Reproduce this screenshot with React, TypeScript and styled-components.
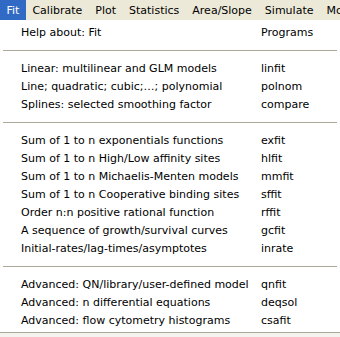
import styled, { createGlobalStyle } from "styled-components"

const GlobalStyle = createGlobalStyle`
body {
  margin: 0;
  background: #ffffff;
  font-family: "DejaVu Sans", "Liberation Sans", sans-serif;
  font-size: 11px;
  color: #000000;
}
`

const bar = ["Fit", "Calibrate", "Plot", "Statistics", "Area/Slope", "Simulate", "Modules"]

const groups = [
    [["Help about: Fit", "Programs"]],
    [
        ["Linear: multilinear and GLM models", "linfit"],
        ["Line; quadratic; cubic;\u2026; polynomial", "polnom"],
        ["Splines: selected smoothing factor", "compare"],
    ],
    [
        ["Sum of 1 to n exponentials functions", "exfit"],
        ["Sum of 1 to n High/Low affinity sites", "hlfit"],
        ["Sum of 1 to n Michaelis-Menten models", "mmfit"],
        ["Sum of 1 to n Cooperative binding sites", "sffit"],
        ["Order n:n positive rational function", "rffit"],
        ["A sequence of growth/survival curves", "gcfit"],
        ["Initial-rates/lag-times/asymptotes", "inrate"],
    ],
    [
        ["Advanced: QN/library/user-defined model", "qnfit"],
        ["Advanced: n differential equations", "deqsol"],
        ["Advanced: flow cytometry histograms", "csafit"],
    ],
]

const App = () => {
    return (
        <Screen>
            <GlobalStyle />
            <MenuBar>
                {bar.map((b, i) => (
                    <BarItem key={b} active={i === 0}>{b}</BarItem>
                ))}
            </MenuBar>
            <Dropdown>
                {groups.map((g, gi) => (
                    <div key={gi}>
                        {gi > 0 && <Separator />}
                        {g.map(([label, prog]) => (
                            <Row key={label}>
                                <Label>{label}</Label>
                                <Prog>{prog}</Prog>
                            </Row>
                        ))}
                    </div>
                ))}
            </Dropdown>
        </Screen>
    )
}

export default App

const Screen = styled.div`
width: 340px;
height: 337px;
overflow: hidden;
background: #f4f3ee;
`

const MenuBar = styled.div`
display: flex;
height: 20px;
background: #ece9d8;
white-space: nowrap;
overflow: hidden;
`

const BarItem = styled.div<{ active?: boolean }>`
display: flex;
align-items: center;
flex-shrink: 0;
padding: 0 6.5px;
height: 20px;
background: ${p => p.active ? "#316ac5" : "transparent"};
color: ${p => p.active ? "#ffffff" : "#000000"};
`

const Dropdown = styled.div`
background: #ffffff;
padding: 3px 0;
border-bottom: 1px solid #aca899;
`

const Row = styled.div`
display: grid;
grid-template-columns: 240px 1fr;
height: 18px;
align-items: center;
padding-left: 21px;
white-space: nowrap;
`

const Label = styled.span``

const Prog = styled.span``

const Separator = styled.div`
height: 18px;
display: flex;
align-items: center;
padding: 0 3px;
&::after {
  content: "";
  flex: 1;
  border-top: 1px solid #aca899;
}
`
